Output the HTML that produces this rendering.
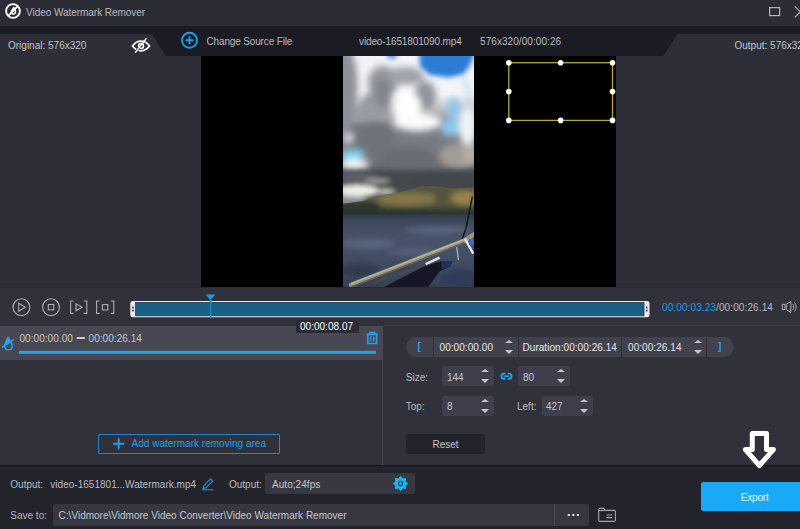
<!DOCTYPE html>
<html><head><meta charset="utf-8"><title>Video Watermark Remover</title>
<style>
*{box-sizing:border-box;margin:0;padding:0}
html,body{width:800px;height:529px;overflow:hidden;background:#2d2e38}
body{position:relative;font-family:"Liberation Sans",sans-serif;font-size:10px;color:#c9cacf;line-height:12px}
.a{position:absolute}
.t{position:absolute;white-space:pre;line-height:12px;height:12px}
svg{position:absolute;overflow:visible}
.inp{position:absolute;background:#3e3f4a;border-radius:3px;height:20px}
.sp{position:absolute;width:0;height:0;border-left:4.1px solid transparent;border-right:4.1px solid transparent;margin-left:-0.1px}
.up{border-bottom:3.7px solid #c4c5cb}
.dn{border-top:4px solid #c4c5cb}
</style></head><body>
<!-- title bar -->
<div class="a" id="titlebar" style="left:0;top:0;width:800px;height:26px;background:#2b2c36"></div>
<div class="a" id="toolbar" style="left:0;top:26px;width:800px;height:30px;background:#1a1b23"></div>
<!-- tabs -->
<svg id="tabs" style="left:0;top:0" width="800" height="60">
 <polygon points="0,34 152,34 165.8,56 0,56" fill="#2d2e38"/>
 <polygon points="800,34 678,34 663,56 800,56" fill="#2d2e38"/>
</svg>

<!-- title content -->
<svg id="appicon" style="left:5.2px;top:3.3px" width="16" height="16" viewBox="0 0 16 16">
 <circle cx="8" cy="8" r="6.9" fill="none" stroke="#fff" stroke-width="1.9"/>
 <path d="M3.2 12.8 L12.8 3.2" stroke="#fff" stroke-width="1.7" fill="none"/>
 <path d="M8.8 4.8 C10.4 7 10.9 8.4 10.3 9.8 C9.7 11.2 7.6 11.4 6.7 10.3 C5.9 9.2 6.6 7.5 8.8 4.8 Z" fill="none" stroke="#fff" stroke-width="1.6"/>
</svg>
<div class="t" style="left:26px;top:6.8px;color:#b9bac1;letter-spacing:-0.04px">Video Watermark Remover</div>
<svg id="winbtns" style="left:760px;top:0" width="40" height="26">
 <rect x="9.6" y="7.6" width="10" height="8" fill="none" stroke="#b4b5bb" stroke-width="1.2"/>
 <path d="M34.8 6.3 L45.8 17.3 M45.8 6.3 L34.8 17.3" stroke="#b4b5bb" stroke-width="1.2" fill="none"/>
</svg>
<!-- toolbar content -->
<div class="t" style="left:8px;top:39.5px;color:#c2c3c9">Original: 576x320</div>
<svg id="eye" style="left:131.3px;top:36.6px" width="20" height="18" viewBox="0 0 20 18">
 <path d="M1.5 9 C4.5 5 8 4.2 10 4.2 C12 4.2 15.5 5 18.5 9 C15.5 13 12 13.8 10 13.8 C8 13.8 4.5 13 1.5 9 Z" fill="none" stroke="#fff" stroke-width="1.7"/>
 <circle cx="10" cy="9" r="2.5" fill="none" stroke="#fff" stroke-width="1.5"/>
 <path d="M4.6 15.1 L8.2 10.5" stroke="#2d2e38" stroke-width="2.8"/>
 <path d="M4.2 15.6 L15.4 1.4" stroke="#fff" stroke-width="1.5"/>
</svg>
<svg id="plus" style="left:180.1px;top:31.1px" width="19" height="19" viewBox="0 0 19 19">
 <circle cx="9.5" cy="9.3" r="7.5" fill="none" stroke="#1d9fe6" stroke-width="1.9"/>
 <path d="M9.5 5.3 V13.3 M5.5 9.3 H13.5" stroke="#1d9fe6" stroke-width="1.9"/>
</svg>
<div class="t" style="left:206.5px;top:36px;color:#b9bac1;letter-spacing:-0.15px">Change Source File</div>
<div class="t" style="left:359px;top:36px;color:#b9bac1;letter-spacing:-0.12px">video-1651801090.mp4</div>
<div class="t" style="left:480px;top:36px;color:#b9bac1;letter-spacing:0.07px">576x320/00:00:26</div>
<div class="t" style="left:734.5px;top:39.5px;color:#c2c3c9">Output: 576x320</div>
<div class="a" id="main" style="left:0;top:56px;width:800px;height:231px;background:#2d2e38"></div>
<div class="a" id="video" style="left:201px;top:56px;width:415px;height:231px;background:#000"></div>

<svg id="photo" style="left:343px;top:56px;overflow:hidden" width="131" height="231" viewBox="0 0 131 231">
 <defs>
  <filter id="b5" x="-50%" y="-50%" width="200%" height="200%"><feGaussianBlur stdDeviation="3.6"/></filter>
  <filter id="b3" x="-50%" y="-50%" width="200%" height="200%"><feGaussianBlur stdDeviation="2.4"/></filter>
  <filter id="b1" x="-20%" y="-20%" width="140%" height="140%"><feGaussianBlur stdDeviation="1.1"/></filter>
  <filter id="b05" x="-20%" y="-20%" width="140%" height="140%"><feGaussianBlur stdDeviation="0.7"/></filter>
  <linearGradient id="sea" x1="0" y1="0" x2="0" y2="1">
   <stop offset="0" stop-color="#2f3a49"/><stop offset="0.1" stop-color="#3e495c"/><stop offset="0.35" stop-color="#48536a"/><stop offset="0.7" stop-color="#404b61"/><stop offset="1" stop-color="#354054"/>
  </linearGradient>
  <linearGradient id="mtn" x1="0" y1="0" x2="0" y2="1">
   <stop offset="0" stop-color="#56543f"/><stop offset="0.3" stop-color="#6e683c"/><stop offset="0.62" stop-color="#5c5a36"/><stop offset="0.8" stop-color="#363e31"/><stop offset="1" stop-color="#283130"/>
  </linearGradient>
  <linearGradient id="cl" x1="0" y1="0" x2="0" y2="1">
   <stop offset="0" stop-color="#f3f4f7"/><stop offset="0.24" stop-color="#f3f4f7"/><stop offset="0.44" stop-color="#7e8089"/><stop offset="0.62" stop-color="#73757d"/><stop offset="0.78" stop-color="#5a5d65"/><stop offset="0.85" stop-color="#4b4e55"/><stop offset="1" stop-color="#484b52"/>
  </linearGradient>
 </defs>
 <rect width="131" height="160" fill="url(#cl)"/>
 <!-- strip 1+2 clouds -->
 <g filter="url(#b3)">
  <polygon points="76,-8 77,11 87,19 106,21.5 121,18 128,8 133,-8" fill="#2a7cd4"/>
  <ellipse cx="49" cy="-1" rx="5" ry="4" fill="#4a90dc"/>
 </g>
 <g filter="url(#b5)">

  <ellipse cx="-1" cy="30" rx="15.5" ry="44" fill="#8e9098"/>
  <ellipse cx="22" cy="57" rx="10" ry="9" fill="#999ba3"/>
  <ellipse cx="33" cy="50" rx="16" ry="15" fill="#989aa2"/>
  <ellipse cx="40" cy="26" rx="15" ry="16" fill="#96989f"/>
  <ellipse cx="62" cy="20" rx="19" ry="9" fill="#a0a2aa"/>
  <ellipse cx="82" cy="40" rx="11" ry="15" fill="#92949c"/>
  <ellipse cx="40" cy="36" rx="9" ry="15" fill="#83858d"/>
  <ellipse cx="64" cy="52" rx="14" ry="17" fill="#ffffff"/>
  <ellipse cx="74" cy="66" rx="24" ry="9" fill="#fbfbfc"/>
  <ellipse cx="111" cy="54" rx="6" ry="13" fill="#8cc8ee"/>
  <ellipse cx="108" cy="72" rx="10" ry="8" fill="#8ccbee"/>
  <ellipse cx="125" cy="70" rx="9" ry="20" fill="#f0f3f6"/>
  <path d="M121 21 L129 49" stroke="#9ccdf0" stroke-width="2.5" fill="none"/>
  <ellipse cx="30" cy="84" rx="22" ry="18" fill="#70727b"/>
  <ellipse cx="0" cy="76" rx="8" ry="16" fill="#8a8e9a"/>
  <ellipse cx="66" cy="104" rx="28" ry="12" fill="#6a6c74"/>
  <ellipse cx="116" cy="100" rx="20" ry="13" fill="#a29c96"/>
  <ellipse cx="128" cy="98" rx="8" ry="10" fill="#b5aea6"/>
  <ellipse cx="6" cy="82" rx="4" ry="4" fill="#e8eef2"/>
  <ellipse cx="9" cy="99" rx="12" ry="5.5" fill="#7fd6f2"/>
  <ellipse cx="11" cy="109" rx="15" ry="6" fill="#f0f4f4"/>
 </g>
 <!-- lower dark clouds -->
 <g filter="url(#b3)">
  <rect x="-10" y="114" width="151" height="22" fill="#45484e"/>
  <ellipse cx="14" cy="121" rx="20" ry="5" fill="#5b5e66"/>
  <ellipse cx="34" cy="125" rx="13" ry="2.6" fill="#a09e96"/>
  <ellipse cx="100" cy="126" rx="36" ry="6" fill="#43464c"/>
  <ellipse cx="14" cy="135" rx="22" ry="6" fill="#eceee8"/>
  <ellipse cx="42" cy="136" rx="10" ry="3" fill="#c4c2b4"/>
  <ellipse cx="8" cy="145" rx="16" ry="4.5" fill="#8b919a"/>
 </g>
 <clipPath id="mclip"><path d="M-3 148.5 L21 144.7 L41 139 L56 136.5 L77 130.7 L92 130 L106 132.4 L134 131.5 L134 160 L-3 160 Z"/></clipPath>
 <g filter="url(#b05)">
 <g clip-path="url(#mclip)">
  <rect x="-3" y="125" width="140" height="40" fill="#5c5a3c"/>
  <g filter="url(#b3)">
   <ellipse cx="64" cy="143" rx="30" ry="6.5" fill="#81764a"/>
   <ellipse cx="84" cy="131" rx="22" ry="3.5" fill="#54534a"/>
   <ellipse cx="98" cy="141" rx="6" ry="8" fill="#55533a"/>
   <ellipse cx="122" cy="142" rx="14" ry="7" fill="#98814c"/>
   <ellipse cx="14" cy="150" rx="24" ry="5" fill="#2e3830"/>
   <rect x="-8" y="152.5" width="150" height="12" fill="#29322f"/>
   <ellipse cx="110" cy="153" rx="24" ry="2.5" fill="#3d4236"/>
  </g>
 </g>
 </g>
 <rect x="0" y="158.2" width="131" height="73" fill="url(#sea)"/>
 <g filter="url(#b3)" opacity="0.65">
  <ellipse cx="25" cy="188" rx="28" ry="5" fill="#626e88"/>
  <ellipse cx="95" cy="174" rx="34" ry="4" fill="#62708a"/>
  <ellipse cx="70" cy="196" rx="26" ry="4" fill="#5c6880"/>
  <ellipse cx="16" cy="214" rx="20" ry="7" fill="#2b3648"/>
  <ellipse cx="60" cy="212" rx="16" ry="4" fill="#333f54"/>
  <ellipse cx="118" cy="222" rx="20" ry="9" fill="#2c3954"/>
 </g>
 <g filter="url(#b05)">
  <path d="M41 231 L80.2 210.7 L98.2 205 L108.9 205 L108 209.8 L96.6 215.6 L85.1 231 Z" fill="#131925"/>
  <path d="M98.2 205 L108.9 205 L108 209.8 L99 213.5 Z" fill="#1a3458"/>
  <path d="M29.5 227 L91.7 205.6" stroke="#4e4b40" stroke-width="2" fill="none"/>
  <path d="M129.4 140.5 L122.8 173 L119.2 182.8" stroke="#14171c" stroke-width="1.5" fill="none"/>
  <path d="M8.2 228.9 L121.2 184.7 L131 178.4" stroke="#9a9680" stroke-width="4.6" fill="none" stroke-linecap="round" stroke-linejoin="round"/>
  <path d="M8.2 227.8 L121.2 183.6" stroke="#bbb8a0" stroke-width="1.2" fill="none"/>
  <path d="M8.2 230.8 L121.2 186.6" stroke="#625f4e" stroke-width="1.3" fill="none"/>
  <path d="M122 182.8 L130.2 197.6" stroke="#e6eaf0" stroke-width="2.3" fill="none"/>
  <rect x="126" y="183" width="6" height="6" fill="#2a6fd0"/>
  <path d="M82.7 208.2 L96.6 201.7" stroke="#e0e2dc" stroke-width="2.4" fill="none"/>
  <path d="M113.8 191 L115.4 204" stroke="#aab4c2" stroke-width="1.3" fill="none"/>
 </g>
</svg>
<!-- selection -->
<svg id="sel" style="left:0;top:0" width="800" height="300">
 <rect x="508.8" y="62.7" width="103.7" height="57.7" fill="none" stroke="#b6a83a" stroke-width="1.3"/>
 <g fill="#fff">
  <circle cx="508.8" cy="62.7" r="2.8"/><circle cx="560.6" cy="62.7" r="2.8"/><circle cx="612.5" cy="62.7" r="2.8"/>
  <circle cx="508.8" cy="91.6" r="2.8"/><circle cx="612.5" cy="91.6" r="2.8"/>
  <circle cx="508.8" cy="120.4" r="2.8"/><circle cx="560.6" cy="120.4" r="2.8"/><circle cx="612.5" cy="120.4" r="2.8"/>
 </g>
</svg>

<div class="a" style="left:0;top:287px;width:800px;height:1.4px;background:#292a33"></div>
<!-- controls area -->
<div class="a" id="ctrl" style="left:0;top:288px;width:800px;height:38px;background:#30313b"></div>

<!-- playback controls -->
<svg id="pb" style="left:0;top:288px" width="800" height="40">
 <g fill="none" stroke="#acadb4" stroke-width="1.1">
  <circle cx="21.4" cy="19.2" r="8.4"/>
  <path d="M18.7 15.2 L25.3 19.2 L18.7 23.2 Z"/>
  <circle cx="51" cy="19.2" r="8.4"/>
  <rect x="48.3" y="16.5" width="5.4" height="5.4"/>
  <path d="M73.6 13 H70.6 V25.4 H73.6 M83.8 13 H86.8 V25.4 H83.8"/>
  <path d="M76 15.6 L82 19.2 L76 22.8 Z"/>
  <path d="M99.6 13 H96.6 V25.4 H99.6 M110.8 13 H113.8 V25.4 H110.8"/>
  <rect x="102.4" y="16.6" width="5.4" height="5.4"/>
 </g>
 <!-- timeline -->
 <rect x="130.3" y="13" width="519.2" height="16.2" rx="2.5" fill="#e9e9ec"/>
 <rect x="135.6" y="14.4" width="508.4" height="13.4" fill="#1b5f85" stroke="#173f56" stroke-width="0.8"/>
 <g fill="#2a2b33"><rect x="132.2" y="18.6" width="1.6" height="1.8"/><rect x="132.2" y="21.6" width="1.6" height="1.8"/>
 <rect x="645.9" y="18.6" width="1.6" height="1.8"/><rect x="645.9" y="21.6" width="1.6" height="1.8"/></g>
 <path d="M205.8 6.6 H215.2 L210.5 12.6 Z" fill="#1b9be4"/>
 <path d="M210.5 12 V30" stroke="#1b8fd4" stroke-width="1"/>
 <!-- volume -->
 <g fill="none" stroke="#a9aab1" stroke-width="1">
  <rect x="782.3" y="16.3" width="2.6" height="5.2"/>
  <path d="M786.3 16.2 L790.9 13.5 V24.6 L786.3 21.6 Z"/>
  <path d="M792.8 16 C794 17.8 794 20.2 792.8 22 M794.4 14.4 C796.6 17.2 796.6 20.8 794.4 23.6"/>
 </g>
</svg>
<div class="t" style="left:662px;top:302px;color:#b9bac1;letter-spacing:0.11px"><span style="color:#1d9fe6">00:00:03.23</span>/00:00:26.14</div>
<div class="a" id="leftpanel" style="left:0;top:326px;width:384px;height:139px;background:#30313b"></div>
<div class="a" id="rightpanel" style="left:384px;top:326px;width:416px;height:139px;background:#30313b"></div>
<div class="a" id="vdiv" style="left:382.2px;top:326px;width:1px;height:139px;background:#474851"></div>
<div class="a" id="row" style="left:0;top:326px;width:382px;height:34px;background:#474853"></div>

<!-- segment row -->
<svg id="rowicons" style="left:0;top:326px" width="384" height="36">
 <g fill="none" stroke="#25a2e6" stroke-width="1.4" stroke-linecap="round" stroke-linejoin="round">
  <path d="M8.1 11.2 C9.8 14 12.2 17.4 12.2 20.2 C12.2 22.5 10.6 23.9 8.4 23.9 C6.2 23.9 4.7 22.5 4.7 20.2 C4.7 17.4 6.6 14 8.1 11.2 Z"/>
  <path d="M8.1 11.6 L10.6 15.6 L5.4 19 Z" fill="#25a2e6"/>
  <path d="M2.3 21.2 L13.4 13.8" stroke-width="1.5"/>
 </g>
 <rect x="19" y="24.8" width="357" height="3" fill="#27a2e4"/>
 <g fill="none" stroke="#25a2e6" stroke-width="1.7">
  <path d="M366.4 8.4 H378 M369.8 8.2 V6.5 H374.6 V8.2"/>
  <path d="M367.8 8.6 V17.5 H376.6 V8.6"/>
  <path d="M370.8 10.4 V15.6 M373.6 10.4 V15.6" stroke-width="1.3"/>
 </g>
</svg>
<div class="t" style="left:19.5px;top:332.5px;color:#c6c7cc;letter-spacing:0.05px">00:00:00.00 <span style="letter-spacing:0;font-size:8px;font-weight:bold;color:#ededf0;position:relative;top:-2.6px;line-height:0;text-shadow:0 0.7px 0 #ededf0;margin:0 1px">—</span> 00:00:26.14</div>
<!-- tooltip -->
<div class="a" style="left:296px;top:320px;width:63px;height:12.5px;background:#2a2b34"></div>
<div class="t" style="left:300px;top:320.8px;color:#fff;letter-spacing:0.02px">00:00:08.07</div>
<!-- add button -->
<div class="a" style="left:98px;top:433.5px;width:181.5px;height:20px;border:1.2px solid #2085c4;border-radius:1px"></div>
<svg style="left:112px;top:437px" width="14" height="14"><path d="M6.7 1.2 V12.2 M1.2 6.7 H12.2" stroke="#1d9fe6" stroke-width="1.9" fill="none"/></svg>
<div class="t" style="left:131.5px;top:438.1px;color:#2a9fe6;letter-spacing:0.02px">Add watermark removing area</div>

<!-- right panel -->
<div class="a" style="left:384px;top:324.5px;width:416px;height:1px;background:#3b3c47"></div>
<div class="a" id="pill" style="left:405.8px;top:337px;width:328px;height:20px;border-radius:10px;background:#41424d"></div>
<div class="a" style="left:433px;top:337px;width:1px;height:20px;background:#2f303a"></div>
<div class="a" style="left:518px;top:337px;width:1px;height:20px;background:#2f303a"></div>
<div class="a" style="left:621px;top:337px;width:1px;height:20px;background:#2f303a"></div>
<div class="a" style="left:706px;top:337px;width:1px;height:20px;background:#2f303a"></div>
<div class="t" style="left:417.6px;top:340.5px;color:#2aa5ea;font-weight:bold">[</div>
<div class="t" style="left:718.1px;top:340.5px;color:#2aa5ea;font-weight:bold">]</div>
<div class="t" style="left:439.5px;top:341.5px;color:#e6e6ea;letter-spacing:0.07px">00:00:00.00</div>
<div class="t" style="left:522.5px;top:341.5px;color:#e6e6ea;letter-spacing:0.05px">Duration:00:00:26.14</div>
<div class="t" style="left:628px;top:341.5px;color:#e6e6ea;letter-spacing:0.07px">00:00:26.14</div>
<div class="sp up" style="left:505.5px;top:340.3px"></div><div class="sp dn" style="left:505.5px;top:350px"></div>
<div class="sp up" style="left:694px;top:340.3px"></div><div class="sp dn" style="left:694px;top:350px"></div>

<div class="t" style="left:405.8px;top:371.6px;color:#b9bac1">Size:</div>
<div class="inp" style="left:442px;top:366.3px;width:52px"></div>
<div class="t" style="left:447px;top:371.6px;color:#c6c7cc">144</div>
<div class="sp up" style="left:481.5px;top:369.3px"></div><div class="sp dn" style="left:481.5px;top:379px"></div>
<svg id="link" style="left:499.8px;top:371.4px" width="13" height="11" viewBox="0 0 13 11">
 <g fill="none" stroke="#22a4ea" stroke-width="1.9">
  <path d="M5.4 2.6 H4 C0.7 2.6 0.7 7.8 4 7.8 H5.4"/>
  <path d="M7.6 2.6 H9 C12.3 2.6 12.3 7.8 9 7.8 H7.6"/>
  <path d="M4.2 5.2 H8.8" stroke-width="1.7"/>
 </g>
</svg>
<div class="inp" style="left:518.3px;top:366.3px;width:52px"></div>
<div class="t" style="left:523px;top:371.6px;color:#c6c7cc">80</div>
<div class="sp up" style="left:557.5px;top:369.3px"></div><div class="sp dn" style="left:557.5px;top:379px"></div>

<div class="t" style="left:405.8px;top:400.6px;color:#b9bac1">Top:</div>
<div class="inp" style="left:442px;top:395.8px;width:52px"></div>
<div class="t" style="left:447px;top:400.6px;color:#c6c7cc">8</div>
<div class="sp up" style="left:481.5px;top:399.3px"></div><div class="sp dn" style="left:481.5px;top:409px"></div>
<div class="t" style="left:517px;top:400.6px;color:#b9bac1">Left:</div>
<div class="inp" style="left:541.8px;top:395.8px;width:51.5px"></div>
<div class="t" style="left:546px;top:400.6px;color:#c6c7cc">427</div>
<div class="sp up" style="left:580.5px;top:399.3px"></div><div class="sp dn" style="left:580.5px;top:409px"></div>

<div class="a" style="left:405.8px;top:434.3px;width:79.2px;height:19.5px;background:#22232b;border-radius:2px"></div>
<div class="t" style="left:432.5px;top:438.5px;color:#c2c3c9">Reset</div>
<div class="a" id="bottom" style="left:0;top:465px;width:800px;height:64px;background:#22232b;border-top:1.5px solid #121318"></div>

<!-- bottom content -->
<div class="t" style="left:10.3px;top:478.6px;color:#b9bac1">Output:</div>
<div class="t" style="left:50.3px;top:478.6px;color:#b9bac1;letter-spacing:0.02px">video-1651801...Watermark.mp4</div>
<svg id="pencil" style="left:201px;top:477px" width="14" height="14" viewBox="0 0 14 14">
 <g fill="none" stroke="#2a8fd6" stroke-width="1.1" stroke-linejoin="round">
  <path d="M2 11.6 L2.8 8.6 L9.6 1.8 L11.8 4 L5 10.8 Z"/>
  <path d="M1.2 12.8 H12.6"/>
 </g>
</svg>
<div class="t" style="left:229px;top:478.6px;color:#b9bac1">Output:</div>
<div class="a" style="left:264.5px;top:473px;width:150.5px;height:21.3px;background:#363741;border-radius:2px"></div>
<div class="t" style="left:272px;top:478.6px;color:#c6c7cc;letter-spacing:0.05px">Auto;24fps</div>
<svg id="gear" style="left:392.8px;top:476px" width="15" height="15" viewBox="-7.5 -7.5 15 15">
 <polygon points="0.00,-7.30 1.91,-4.62 5.16,-5.16 4.62,-1.91 7.30,0.00 4.62,1.91 5.16,5.16 1.91,4.62 0.00,7.30 -1.91,4.62 -5.16,5.16 -4.62,1.91 -7.30,0.00 -4.62,-1.91 -5.16,-5.16 -1.91,-4.62" fill="#1fb0f6" stroke="#1fb0f6" stroke-width="1" stroke-linejoin="round"/>
 <circle r="2.1" fill="#1fb0f6" stroke="#15405e" stroke-width="1.1"/>
</svg>
<div class="t" style="left:10.3px;top:509.5px;color:#b9bac1">Save to:</div>
<div class="a" style="left:52.9px;top:504px;width:536.6px;height:21.5px;background:#363741;border-radius:2px"></div>
<div class="a" style="left:554.2px;top:504px;width:1px;height:21.5px;background:#4a4b55"></div>
<div class="t" style="left:58.6px;top:509.5px;color:#c6c7cc;letter-spacing:0.01px">C:\Vidmore\Vidmore Video Converter\Video Watermark Remover</div>
<svg id="dots" style="left:565px;top:510px" width="18" height="10"><g fill="#e8e8ec"><rect x="2.7" y="4" width="2" height="2"/><rect x="7.3" y="4" width="2" height="2"/><rect x="11.9" y="4" width="2" height="2"/></g></svg>
<svg id="folder" style="left:597px;top:506px" width="22" height="18" viewBox="0 0 22 18">
 <g fill="none" stroke="#a4a5ac" stroke-width="1.1" stroke-linejoin="round">
  <path d="M1.7 3.8 Q1.7 2.4 3.1 2.4 H6.8 L8.2 4.4 H17 Q18.4 4.4 18.4 5.8 V14 Q18.4 15.4 17 15.4 H3.1 Q1.7 15.4 1.7 14 Z"/>
  <path d="M2 4.6 H8"/>
  <path d="M9.4 9 H15 M9.4 11.6 H15" stroke-width="1.2"/>
 </g>
</svg>
<div class="a" id="export" style="left:701.2px;top:482.4px;width:110px;height:28.6px;background:#1aa9f5;border-radius:2px"></div>
<div class="t" style="left:740.8px;top:491.6px;color:#eaf6fe;letter-spacing:-0.2px">Export</div>
<!-- arrow -->
<svg id="arrow" style="left:0;top:0" width="800" height="529">
 <path d="M752.3 433.4 H766.5 V449.6 H773.4 L759.4 465.5 L745.4 449.6 H752.3 Z" fill="#2f303a" stroke="#fff" stroke-width="5" stroke-linejoin="round"/>
</svg>
</body></html>
